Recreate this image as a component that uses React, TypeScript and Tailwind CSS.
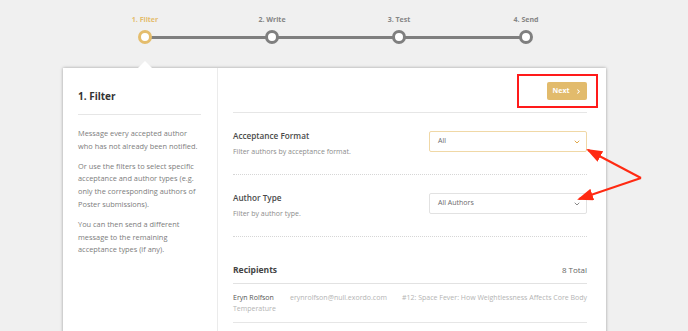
import { ChevronDown, ChevronRight } from "lucide-react"

const steps = ["1. Filter", "2. Write", "3. Test", "4. Send"]

function Stepper() {
  return (
    <div className="relative ml-[120px] w-[431px] pt-[15px]">
      <div className="absolute left-[25px] right-[25px] top-[36px] h-[3px] bg-[#7f7f7f]" />
      <div className="relative flex justify-between">
        {steps.map((s, i) => (
          <div key={s} className="flex w-[50px] flex-col items-center">
            <span
              className={
                i === 0
                  ? "text-[7px] font-bold leading-[10px] text-[#e4bd6d]"
                  : "text-[7px] font-bold leading-[10px] text-[#858585]"
              }
            >
              {s}
            </span>
            <span
              className={
                i === 0
                  ? "mt-[5px] h-[14px] w-[14px] rounded-full border-[3px] border-[#e4bd6d] bg-white"
                  : "mt-[5px] h-[14px] w-[14px] rounded-full border-[3px] border-[#7f7f7f] bg-white"
              }
            />
          </div>
        ))}
      </div>
    </div>
  )
}

function FilterRow({
  title,
  hint,
  value,
  active,
}: {
  title: string
  hint: string
  value: string
  active?: boolean
}) {
  return (
    <div className="flex items-start justify-between border-b border-dotted border-[#d6d6d6] pb-[17px] pt-[18px]">
      <div>
        <div className="text-[8.2px] font-semibold leading-[9px] text-[#4a4a4a]">{title}</div>
        <div className="mt-[7px] text-[7px] leading-[10px] text-[#8c8c8c]">{hint}</div>
      </div>
      <div
        className={
          active
            ? "flex h-[21px] w-[158px] items-center justify-between rounded-[2px] border border-[#f0d8a6] bg-white pl-[8px] pr-[5px]"
            : "flex h-[21px] w-[158px] items-center justify-between rounded-[2px] border border-[#e2e2e2] bg-white pl-[8px] pr-[5px]"
        }
      >
        <span className="text-[7px] text-[#6b6b6b]">{value}</span>
        <ChevronDown
          size={8}
          strokeWidth={3}
          className={active ? "text-[#e0a84a]" : "text-[#8a8a8a]"}
        />
      </div>
    </div>
  )
}

export default function App() {
  return (
    <div
      className="relative h-[331px] w-[688px] overflow-hidden bg-[#f0f0f0]"
      style={{ fontFamily: '"Open Sans", "Liberation Sans", sans-serif' }}
    >
      <Stepper />

      <div className="relative ml-[63px] mt-[24px] flex h-[280px] w-[543px] bg-white shadow-[0_0_3px_rgba(0,0,0,0.35)]">
        <div className="absolute -top-[7px] left-[75px] h-0 w-0 border-x-[7px] border-b-[7px] border-x-transparent border-b-white" />

        <aside className="w-[155px] shrink-0 border-r border-[#ebebeb] pl-[15px] pr-[16px] pt-[21px]">
          <h2 className="pb-[11px] text-[10px] font-bold leading-[14px] text-[#333]">1. Filter</h2>
          <div className="border-t border-[#e6e6e6] pt-[12px] text-[7.4px] leading-[12.8px] text-[#7d7d7d]">
            <p>Message every accepted author who has not already been notified.</p>
            <p className="mt-[7px]">
              Or use the filters to select specific acceptance and author types (e.g. only the
              corresponding authors of Poster submissions).
            </p>
            <p className="mt-[7px]">
              You can then send a different message to the remaining acceptance types (if any).
            </p>
          </div>
        </aside>

        <main className="flex-1 pl-[15px] pr-[19px]">
          <div className="flex h-[45px] items-center justify-end border-b border-[#e6e6e6]">
            <button className="mt-[2px] flex h-[18px] w-[40px] items-center justify-center gap-[5px] rounded-[2px] bg-[#e2bb6c] text-[7px] font-bold text-white">
              Next
              <ChevronRight size={7} strokeWidth={3.5} />
            </button>
          </div>

          <FilterRow
            title="Acceptance Format"
            hint="Filter authors by acceptance format."
            value="All"
            active
          />
          <FilterRow title="Author Type" hint="Filter by author type." value="All Authors" />

          <div className="mt-[26px] flex items-center justify-between border-b border-[#e2e2e2] pb-[6px]">
            <span className="text-[8.5px] font-bold leading-[14px] text-[#444]">Recipients</span>
            <span className="text-[8px] text-[#666]">8 Total</span>
          </div>
          <div className="flex border-b border-[#e6e6e6] pb-[8px] pt-[8px] text-[7px] leading-[11px]">
            <div className="w-[57px] shrink-0">
              <div className="text-[#555]">Eryn Rolfson</div>
              <div className="text-[#b4b4b4]">Temperature</div>
            </div>
            <div className="w-[112px] shrink-0 text-[#b4b4b4]">erynrolfson@null.exordo.com</div>
            <div className="whitespace-nowrap text-[#b4b4b4]">
              #12: Space Fever: How Weightlessness Affects Core Body
            </div>
          </div>
        </main>
      </div>

      {/* annotations */}
      <div className="absolute left-[517px] top-[74px] h-[34px] w-[81px] border-2 border-[#ff1a1a]" />
      <svg className="absolute left-0 top-0" width="688" height="331" viewBox="0 0 688 331">
        <defs>
          <marker id="ah" markerWidth="8" markerHeight="6" refX="7" refY="3" orient="auto">
            <path d="M0 0 L8 3 L0 6 Z" fill="#ff2a12" />
          </marker>
        </defs>
        <path d="M641 178 L588 150" stroke="#ff2a12" strokeWidth="2" fill="none" markerEnd="url(#ah)" />
        <path d="M641 178 L579 199" stroke="#ff2a12" strokeWidth="2" fill="none" markerEnd="url(#ah)" />
      </svg>
    </div>
  )
}
